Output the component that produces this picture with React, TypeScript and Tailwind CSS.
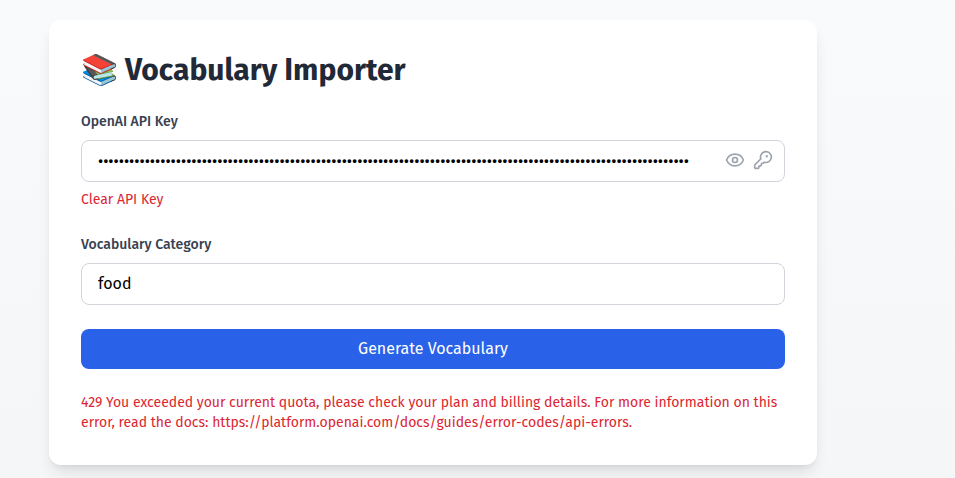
import { useState } from "react";

const ERROR_TEXT = [
  "429 You exceeded your current quota, please check your plan and billing details. For more information on this",
  "error, read the docs: https://platform.openai.com/docs/guides/error-codes/api-errors.",
];

function Eye() {
  return (
    <svg className="h-5 w-5" fill="none" viewBox="0 0 24 24" stroke="currentColor" strokeWidth={2} strokeLinecap="round" strokeLinejoin="round">
      <path d="M2.062 12.348a1 1 0 0 1 0-.696 10.75 10.75 0 0 1 19.876 0 1 1 0 0 1 0 .696 10.75 10.75 0 0 1-19.876 0" />
      <circle cx="12" cy="12" r="3" />
    </svg>
  );
}

function Key() {
  return (
    <svg className="h-5 w-5" fill="none" viewBox="0 0 24 24" stroke="currentColor" strokeWidth={2} strokeLinecap="round" strokeLinejoin="round">
      <path d="M2.586 17.414A2 2 0 0 0 2 18.828V21a1 1 0 0 0 1 1h3a1 1 0 0 0 1-1v-1a1 1 0 0 1 1-1h1a1 1 0 0 0 1-1v-1a1 1 0 0 1 1-1h.172a2 2 0 0 0 1.414-.586l.814-.814a6.5 6.5 0 1 0-4-4z" />
      <circle cx="16.5" cy="7.5" r=".5" fill="currentColor" />
    </svg>
  );
}

export default function App() {
  const [apiKey, setApiKey] = useState("x".repeat(114));
  const [category, setCategory] = useState("food");
  return (
    <div className="h-[478px] overflow-hidden bg-linear-to-b from-[#f9fafc] to-[#f5f6f8] px-[49px] pt-5 font-['Fira_Sans','Noto_Sans',sans-serif]">
      <main className="h-[445px] w-[768px] rounded-xl bg-white p-8 shadow-lg">
        <h1 className="mb-6 flex h-9 items-center text-3xl font-bold whitespace-nowrap text-[#1f2937]">
          <span className="w-[38px] shrink-0 leading-9">📚</span>
          <span className="ml-1.5">Vocabulary Importer</span>
        </h1>
        <label className="mb-2 block text-sm font-medium text-[#374151]">OpenAI API Key</label>
        <div className="flex h-[42px] items-center justify-between rounded-lg border border-[#d1d5db] pr-[11px] pl-4">
          <input
            type="password"
            className="h-10 w-[600px] bg-transparent text-base text-black outline-none"
            value={apiKey}
            onChange={(e) => setApiKey(e.target.value)}
          />
          <span className="flex gap-2 pb-0.5 text-[#9ca3af]">
            <Eye />
            <Key />
          </span>
        </div>
        <button className="mt-[7px] block h-[22px] text-sm leading-[22px] text-[#dc2630]">Clear API Key</button>
        <label className="mt-6 mb-2 block text-sm font-medium text-[#374151]">Vocabulary Category</label>
        <input
          className="block h-[42px] w-full rounded-lg border border-[#d1d5db] px-4 pb-0.5 text-base text-black"
          value={category}
          onChange={(e) => setCategory(e.target.value)}
        />
        <button className="mt-6 block h-10 w-full rounded-lg bg-[#2962e9] text-base text-white">Generate Vocabulary</button>
        <div className="mt-6 text-sm whitespace-nowrap text-[#dc2630]">
          {ERROR_TEXT.map((line) => (
            <p key={line}>{line}</p>
          ))}
        </div>
      </main>
    </div>
  );
}
